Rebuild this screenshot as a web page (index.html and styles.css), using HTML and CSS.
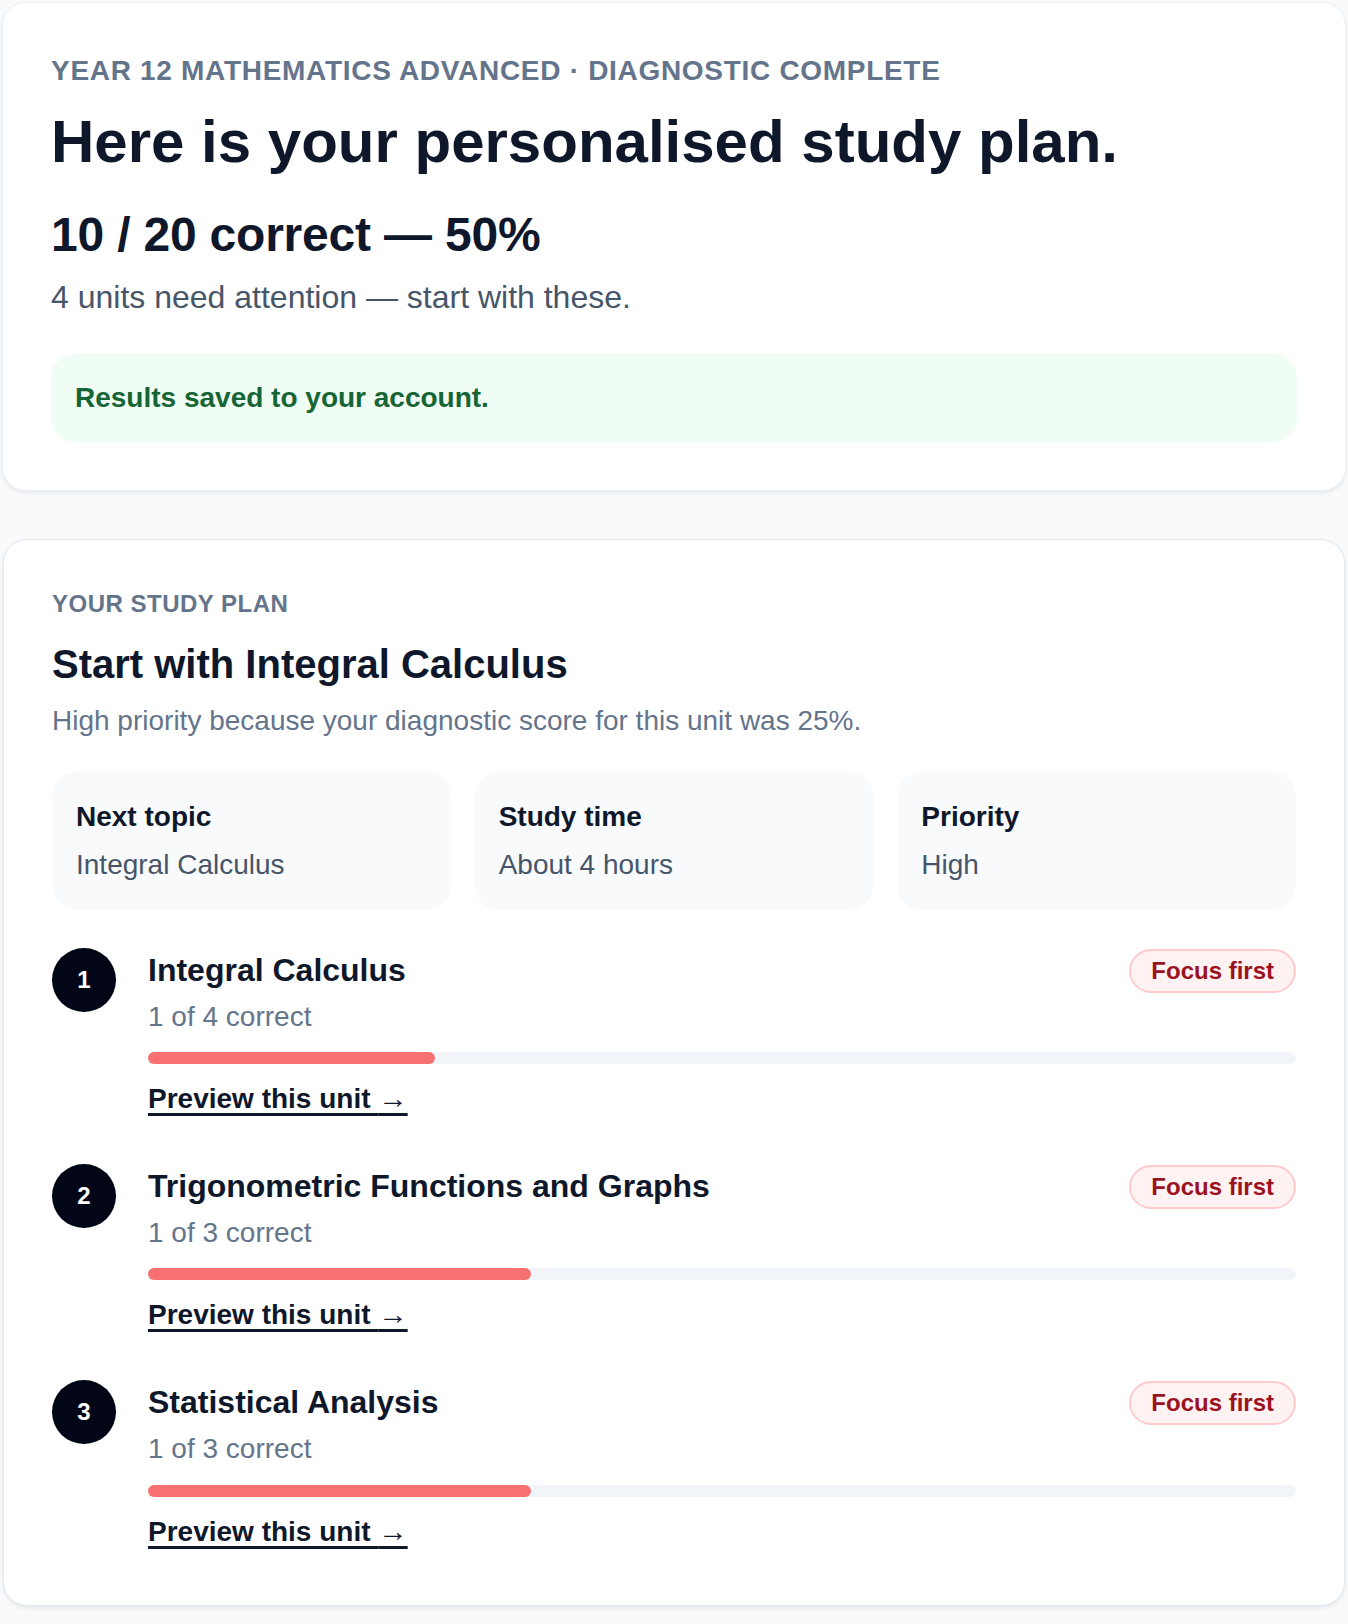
FILE: index.html
```html
<!DOCTYPE html>
<html lang="en">
<head>
    <meta charset="UTF-8">
    <meta name="viewport" content="width=device-width, initial-scale=1.0">
    <title>Diagnostic results</title>
    <link rel="stylesheet" href="styles.css">
</head>
<body>
    <main class="page">
        <!-- Resumo do diagnóstico -->
        <section class="card summary">
            <p class="eyebrow">Year 12 Mathematics Advanced · Diagnostic complete</p>
            <h1>Here is your personalised study plan.</h1>
            <p class="score">10 / 20 correct — 50%</p>
            <p class="lead">4 units need attention — start with these.</p>
            <div class="notice">Results saved to your account.</div>
        </section>

        <!-- Plano de estudo -->
        <section class="card plan">
            <p class="eyebrow small">Your study plan</p>
            <h2>Start with Integral Calculus</h2>
            <p class="reason">High priority because your diagnostic score for this unit was 25%.</p>

            <div class="stats">
                <div class="stat">
                    <span class="stat-label">Next topic</span>
                    <span class="stat-value">Integral Calculus</span>
                </div>
                <div class="stat">
                    <span class="stat-label">Study time</span>
                    <span class="stat-value">About 4 hours</span>
                </div>
                <div class="stat">
                    <span class="stat-label">Priority</span>
                    <span class="stat-value">High</span>
                </div>
            </div>

            <ol class="units">
                <li class="unit">
                    <span class="step">1</span>
                    <div class="unit-body">
                        <div class="unit-head">
                            <h3>Integral Calculus</h3>
                            <span class="badge">Focus first</span>
                        </div>
                        <p class="unit-meta">1 of 4 correct</p>
                        <div class="bar"><span style="width: 25%;"></span></div>
                        <a class="unit-link" href="#">Preview this unit <span class="arrow">→</span></a>
                    </div>
                </li>
                <li class="unit">
                    <span class="step">2</span>
                    <div class="unit-body">
                        <div class="unit-head">
                            <h3>Trigonometric Functions and Graphs</h3>
                            <span class="badge">Focus first</span>
                        </div>
                        <p class="unit-meta">1 of 3 correct</p>
                        <div class="bar"><span style="width: 33.33%;"></span></div>
                        <a class="unit-link" href="#">Preview this unit <span class="arrow">→</span></a>
                    </div>
                </li>
                <li class="unit">
                    <span class="step">3</span>
                    <div class="unit-body">
                        <div class="unit-head">
                            <h3>Statistical Analysis</h3>
                            <span class="badge">Focus first</span>
                        </div>
                        <p class="unit-meta">1 of 3 correct</p>
                        <div class="bar"><span style="width: 33.33%;"></span></div>
                        <a class="unit-link" href="#">Preview this unit <span class="arrow">→</span></a>
                    </div>
                </li>
            </ol>
        </section>
    </main>
</body>
</html>
```

FILE: styles.css
```css
* {
    box-sizing: border-box;
    margin: 0;
    padding: 0;
}

body {
    font-family: 'Liberation Sans', Arial, sans-serif;
    background: #f8fafc;
    color: #0f172a;
}

.page {
    padding: 2px 2px 18px;
}

.card {
    background: #ffffff;
    border: 1px solid #eef2f6;
    border-radius: 24px;
    box-shadow: 0 2px 4px rgba(15, 23, 42, 0.08);
    padding: 50px 48px 48px;
}

.plan {
    margin: 48px 1px 0;
    border-color: #e2e8f0;
    padding-top: 49px;
    padding-bottom: 54px;
}

.eyebrow {
    font-size: 28px;
    line-height: 1.25;
    font-weight: bold;
    letter-spacing: 0.7px;
    text-transform: uppercase;
    color: #64748b;
}

.eyebrow.small {
    font-size: 24px;
    letter-spacing: 0.5px;
}

h1 {
    font-size: 60px;
    line-height: 1.15;
    margin-top: 19px;
    color: #0f172a;
}

.score {
    font-size: 48px;
    line-height: 1.2;
    font-weight: bold;
    letter-spacing: -0.2px;
    margin-top: 30px;
}

.lead {
    font-size: 32px;
    line-height: 1.4;
    color: #475569;
    margin-top: 11px;
}

.notice {
    margin-top: 35px;
    background: #f0fdf4;
    border-radius: 24px;
    padding: 24px;
    font-size: 28px;
    line-height: 1.4;
    font-weight: bold;
    color: #166534;
}

h2 {
    font-size: 40px;
    line-height: 1.2;
    margin-top: 21px;
}

.reason {
    font-size: 28px;
    line-height: 1.5;
    color: #64748b;
    margin-top: 12px;
}

/* Resumo em três caixas */
.stats {
    display: grid;
    grid-template-columns: repeat(3, 1fr);
    gap: 24px;
    margin-top: 30px;
}

.stat {
    background: #f8fafc;
    border-radius: 24px;
    padding: 24px;
    display: flex;
    flex-direction: column;
    gap: 6px;
    font-size: 28px;
    line-height: 1.5;
}

.stat-label {
    font-weight: bold;
    color: #0f172a;
}

.stat-value {
    color: #475569;
}

/* Lista de unidades */
.units {
    list-style: none;
    margin-top: 38px;
    display: flex;
    flex-direction: column;
    gap: 46px;
}

.unit {
    display: flex;
    gap: 32px;
    align-items: flex-start;
}

.step {
    flex: none;
    width: 64px;
    height: 64px;
    border-radius: 50%;
    background: #020617;
    color: #ffffff;
    font-size: 24px;
    font-weight: bold;
    display: flex;
    align-items: center;
    justify-content: center;
}

.unit-body {
    flex: 1;
}

.unit-head {
    display: flex;
    justify-content: space-between;
    align-items: flex-start;
    gap: 24px;
}

h3 {
    font-size: 32px;
    line-height: 44px;
    color: #0f172a;
}

.badge {
    flex: none;
    margin-top: 1px;
    font-size: 24px;
    line-height: 32px;
    font-weight: bold;
    color: #9b1221;
    background: #fef2f2;
    border: 2px solid #fecaca;
    border-radius: 999px;
    padding: 4px 20px;
}

.unit-meta {
    font-size: 28px;
    line-height: 1.4;
    color: #64748b;
    margin-top: 4px;
}

.bar {
    height: 12px;
    background: #f1f5f9;
    border-radius: 6px;
    margin-top: 16px;
}

.bar span {
    display: block;
    height: 100%;
    background: #f87171;
    border-radius: 6px;
}

.unit-link {
    display: inline-block;
    margin-top: 15px;
    font-size: 28px;
    line-height: 1.4;
    font-weight: bold;
    color: #0f172a;
    text-decoration: underline;
    text-decoration-thickness: 3px;
    text-underline-offset: 5px;
}

.unit-link .arrow {
    font-weight: normal;
    font-size: 1.05em;
    line-height: 1;
}
```
